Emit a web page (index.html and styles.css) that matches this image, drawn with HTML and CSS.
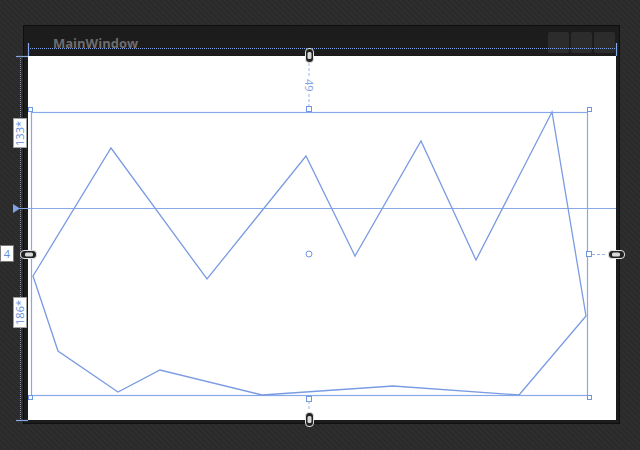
FILE: index.html
```html
<!DOCTYPE html>
<html lang="en">
<head>
    <meta charset="UTF-8">
    <title>MainWindow - Designer</title>
    <link rel="stylesheet" href="styles.css">
</head>
<body>
    <div class="stage">
        <div class="window">
            <div class="titlebar">
                <span class="title">MainWindow</span>
                <div class="caption-buttons">
                    <span></span><span></span><span></span>
                </div>
            </div>
            <div class="client"></div>
        </div>

        <svg class="adorners" width="640" height="450" viewBox="0 0 640 450">
            <!-- window guides -->
            <line class="guide" x1="28.5" y1="43" x2="28.5" y2="56"/>
            <line class="guide" x1="616.5" y1="43" x2="616.5" y2="56"/>
            <line class="dotted" x1="28" y1="48.5" x2="616" y2="48.5"/>
            <line class="guide" x1="16" y1="56.5" x2="28" y2="56.5"/>
            <line class="guide" x1="16" y1="420.5" x2="28" y2="420.5"/>
            <line class="dotted dim" x1="20.5" y1="56" x2="20.5" y2="420"/>

            <!-- grid row divider -->
            <line class="guide" x1="16" y1="208.5" x2="616" y2="208.5"/>
            <path class="arrow" d="M13 204 L20 208.5 L13 213 Z"/>

            <!-- selected shape bounds -->
            <rect class="guide" x="31.5" y="112.5" width="556" height="283"/>
            <rect class="handle" x="28.5" y="107.5" width="4" height="4"/>
            <rect class="handle" x="587.5" y="107.5" width="4" height="4"/>
            <rect class="handle" x="587.5" y="395.5" width="4" height="4"/>
            <rect class="handle" x="28.5" y="395.5" width="4" height="4"/>
            <rect class="handle" x="306.5" y="106.5" width="5" height="5"/>
            <rect class="handle" x="586.5" y="251.5" width="5" height="5"/>
            <rect class="handle" x="306.5" y="396.5" width="5" height="5"/>
            <circle class="handle" cx="309" cy="254" r="3"/>

            <!-- polyline -->
            <polygon class="shape" points="33,276 111,148 207,279 306,156 355,256 421,141 476,260 552,112 586,316 519,395 393,386 262,395 160,370 118,392 58,351"/>

            <!-- margin connectors -->
            <line class="dashed" x1="309" y1="63" x2="309" y2="76"/>
            <line class="dashed" x1="309" y1="94" x2="309" y2="106"/>
            <line class="dashed" x1="592" y1="254.5" x2="607" y2="254.5"/>
            <line class="dashed" x1="309" y1="401" x2="309" y2="411"/>

            <!-- margin locks -->
            <g class="lock">
                <rect x="305.5" y="48.5" width="8" height="14" rx="3.5"/>
                <rect class="lock-in" x="307.5" y="52" width="4" height="7" rx="1.5"/>
            </g>
            <g class="lock">
                <rect x="20.5" y="250.5" width="16" height="8" rx="3.5"/>
                <rect class="lock-in" x="25" y="252.5" width="8" height="4" rx="1.5"/>
            </g>
            <g class="lock">
                <rect x="608.5" y="250.5" width="16" height="8" rx="3.5"/>
                <rect class="lock-in" x="612" y="252.5" width="8" height="4" rx="1.5"/>
            </g>
            <g class="lock">
                <rect x="305.5" y="412.5" width="8" height="14" rx="3.5"/>
                <rect class="lock-in" x="307.5" y="416" width="4" height="7" rx="1.5"/>
            </g>
        </svg>

        <div class="badge badge-row1"><span class="vtext">133*</span></div>
        <div class="badge badge-row2"><span class="vtext">186*</span></div>
        <div class="badge badge-margin">4</div>
        <div class="margin-value"><span class="vtext">49</span></div>
    </div>
</body>
</html>
```

FILE: styles.css
```css
body {
    margin: 0;
    background-color: #2a2a2a;
    font-family: "Open Sans", "DejaVu Sans", sans-serif;
}
.stage {
    position: relative;
    width: 640px;
    height: 450px;
    box-sizing: border-box;
    padding: 25px 0 0 23px;
    background-color: #2b2b2b;
    background-image: repeating-linear-gradient(45deg, rgba(255, 255, 255, 0.015) 0 2px, rgba(0, 0, 0, 0.03) 2px 4px);
    overflow: hidden;
}
.window {
    width: 597px;
    height: 399px;
    box-sizing: border-box;
    border: 1px solid #0f0f0f;
    background-color: #1c1c1c;
    display: flex;
    flex-direction: column;
}
.titlebar {
    height: 30px;
    display: flex;
    align-items: flex-start;
    padding-left: 29px;
}
.title {
    margin-top: 9px;
    font-size: 13px;
    font-weight: bold;
    line-height: 17px;
    color: #6d6d6d;
}
.caption-buttons {
    margin-left: auto;
    margin-right: 4px;
    margin-top: 6px;
    display: flex;
    gap: 2px;
}
.caption-buttons span {
    width: 21px;
    height: 21px;
    background-color: #2c2c2c;
    border-radius: 2px;
}
.client {
    flex: 1;
    margin: 0 3px 3px 4px;
    background-color: #fff;
}

/* designer adorners */
.adorners {
    position: absolute;
    left: 0;
    top: 0;
}
.adorners line,
.adorners rect,
.adorners circle,
.adorners polygon {
    fill: none;
    stroke-width: 1;
}
.adorners .guide {
    stroke: #88a9e8;
    stroke-width: 1.2;
}
.dotted {
    stroke: #7fa3e8;
    stroke-dasharray: 1 1;
}
.dotted.dim {
    stroke: #8a93a8;
}
.dashed {
    stroke: #9ab5ea;
    stroke-dasharray: 3 2;
}
.arrow {
    fill: #7fa3e8;
}
.adorners .handle {
    fill: #fff;
    stroke: #7097e2;
}
.adorners .shape {
    stroke: #7a9be3;
    stroke-width: 1.3;
    stroke-linejoin: miter;
}
.adorners .lock rect {
    fill: #222;
    stroke: #e2e2e2;
}
.adorners .lock .lock-in {
    fill: #d8d8d8;
    stroke: none;
}

.badge {
    position: absolute;
    box-sizing: border-box;
    background-color: #fff;
    border: 1px solid #a0a0a0;
    color: #5f8fdc;
    font-size: 11px;
    display: flex;
    align-items: center;
    justify-content: center;
}
.badge-row1 {
    left: 13px;
    top: 118px;
    width: 14px;
    height: 30px;
}
.badge-row2 {
    left: 13px;
    top: 297px;
    width: 14px;
    height: 31px;
}
.badge-margin {
    left: 0;
    top: 245px;
    width: 14px;
    height: 17px;
    border-color: #777;
}
.vtext {
    writing-mode: vertical-rl;
    transform: rotate(180deg);
    line-height: 12px;
}
.margin-value {
    position: absolute;
    left: 303px;
    top: 76px;
    width: 12px;
    height: 18px;
    color: #7fa3e8;
    font-size: 11px;
    display: flex;
    justify-content: center;
    align-items: center;
}
.margin-value .vtext {
    transform: none;
}
```
